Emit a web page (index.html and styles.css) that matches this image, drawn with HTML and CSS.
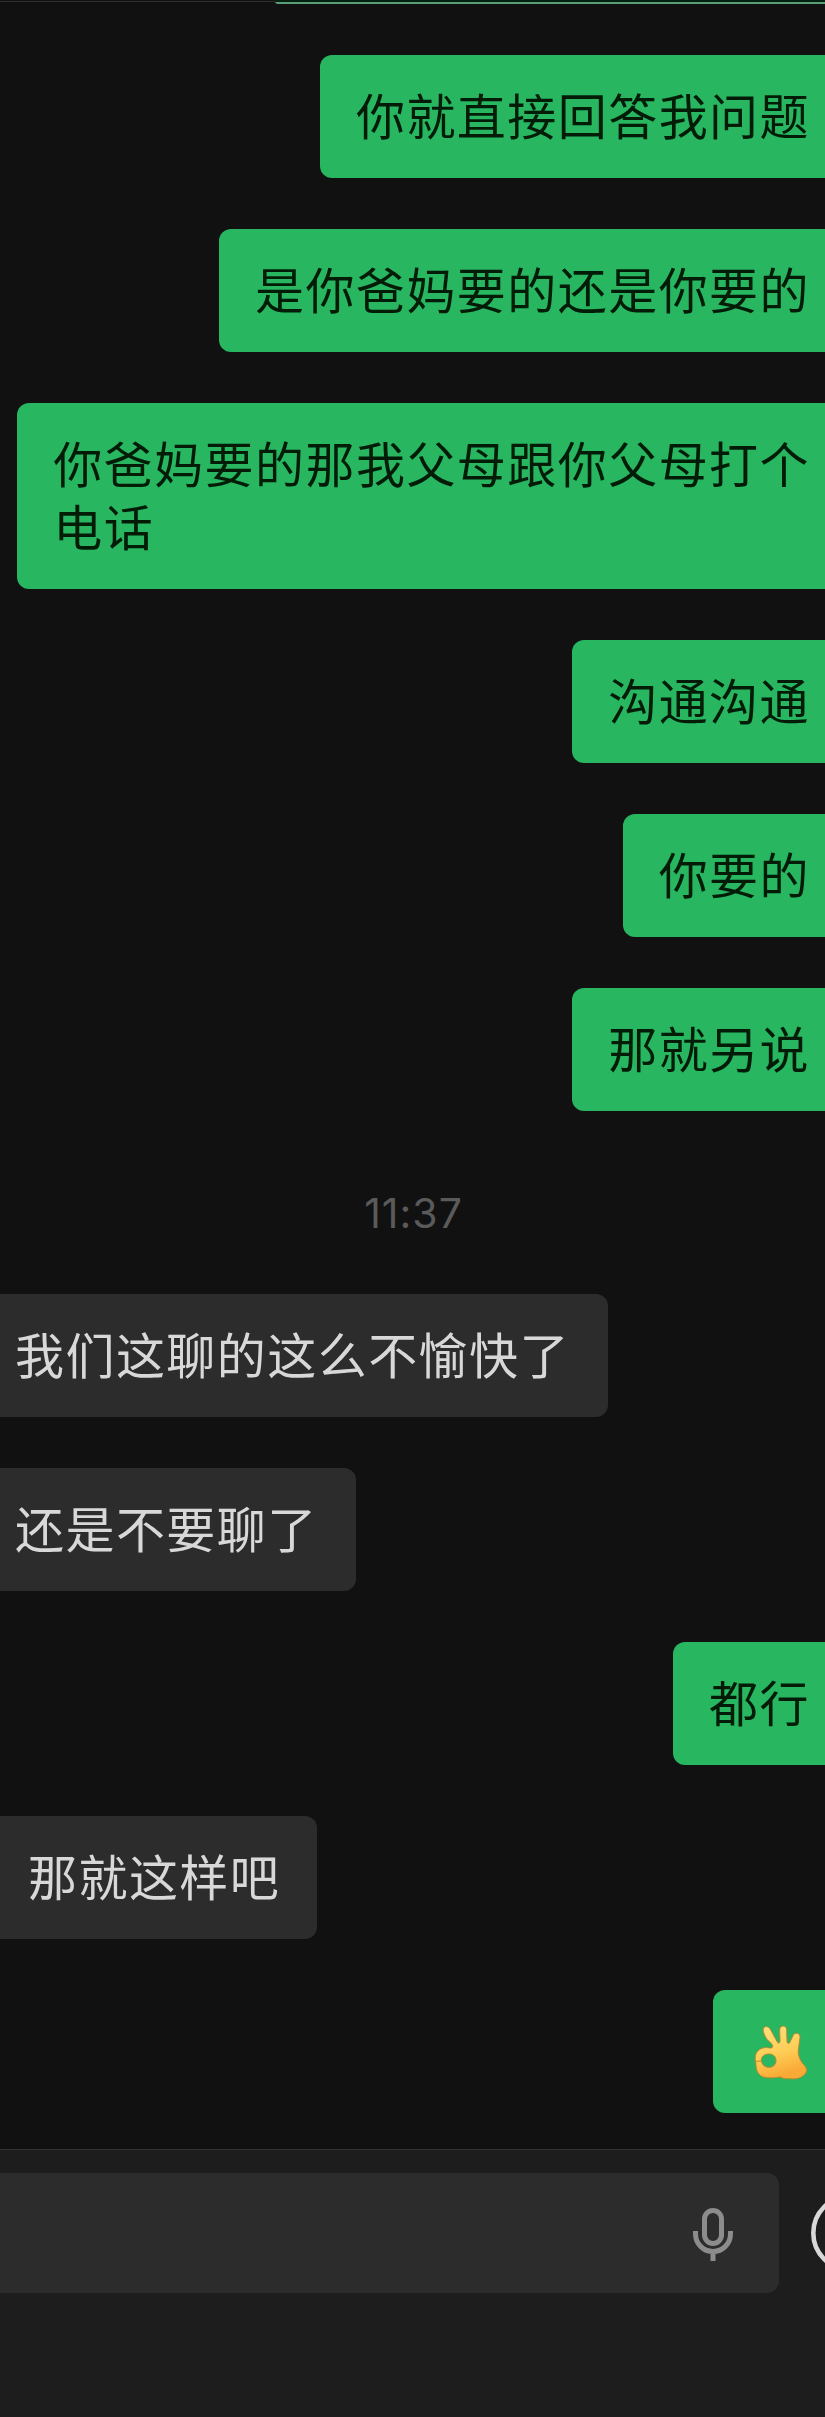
FILE: index.html
```
<!DOCTYPE html>
<html lang="zh-CN">
<head>
    <meta charset="UTF-8">
    <meta name="viewport" content="width=device-width, initial-scale=1.0">
    <title>聊天</title>
    <link rel="stylesheet" href="styles.css">
</head>
<body>
    <div class="chat">
        <div class="top">
            <div class="previous"></div>
        </div>
        <div class="messages">
            <div class="bubble sent">你就直接回答我问题</div>
            <div class="bubble sent">是你爸妈要的还是你要的</div>
            <div class="bubble sent">你爸妈要的那我父母跟你父母打个<br>电话</div>
            <div class="bubble sent">沟通沟通</div>
            <div class="bubble sent">你要的</div>
            <div class="bubble sent">那就另说</div>
            <div class="time">11:37</div>
            <div class="bubble received">我们这聊的这么不愉快了</div>
            <div class="bubble received">还是不要聊了</div>
            <div class="bubble sent">都行</div>
            <div class="bubble received indent">那就这样吧</div>
            <div class="bubble sent emoji">
                <svg class="ok-hand" viewBox="189 159 165 174" role="img" aria-label="OK">
                    <defs>
                        <linearGradient id="skin" x1="0" y1="0" x2="0.3" y2="1">
                            <stop offset="0" stop-color="#ffe183"/>
                            <stop offset="0.6" stop-color="#ffcd55"/>
                            <stop offset="1" stop-color="#f9a936"/>
                        </linearGradient>
                    </defs>
                    <path fill="url(#skin)" stroke="#b58a2c" stroke-width="3" stroke-linejoin="round" fill-rule="evenodd" d="M220 184C216 169 234 164 241 178L262 216C266 222 270 219 270 212L269 180C269 164 290 164 290 180L291 214C292 223 299 222 301 214L309 197C314 185 332 189 330 203L325 239C323 258 332 274 343 286C352 296 353 307 341 316C330 326 316 328 300 326L282 326C277 325 275 321 269 321C254 324 235 325 220 321C204 316 197 298 198 281C196 276 195 268 196 260C198 241 215 231 233 233C240 234 246 235 248 231C249 225 245 221 239 216C228 206 223 196 220 184ZM236 252C223 252 214 260 214 270C214 281 222 291 235 292C249 293 258 284 258 272C258 260 250 252 236 252Z"/>
                    <path fill="none" stroke="#c98a27" stroke-width="3" stroke-linecap="round" d="M198 274L213 273"/>
                </svg>
            </div>
        </div>
        <div class="toolbar">
            <div class="input">
                <svg class="mic" viewBox="0 0 40 54">
                    <rect x="11.5" y="2.5" width="17" height="33" rx="8.5"/>
                    <path d="M2.5 23V26A17.5 17.5 0 0 0 37.5 26V23M20 44V53"/>
                </svg>
            </div>
            <svg class="face" viewBox="0 0 78 78">
                <circle cx="39" cy="39" r="36.7"/>
                <circle class="eye" cx="27" cy="31" r="4"/>
                <circle class="eye" cx="51" cy="31" r="4"/>
                <path d="M20 45A19 19 0 0 0 58 45Z"/>
            </svg>
        </div>
    </div>
</body>
</html>
```
FILE: styles.css
```
* {
    box-sizing: border-box;
}
body {
    margin: 0;
    background-color: #111111;
    font-family: "Noto Sans CJK SC", sans-serif;
}
.chat {
    display: flex;
    flex-direction: column;
    height: 2417px;
    overflow: hidden;
}
.top {
    height: 4px;
    background: linear-gradient(#111111 1px, #2e2e2e 1px, #2e2e2e 2px, #111111 2px);
}
.previous {
    width: 550px;
    height: 4px;
    margin-left: auto;
    border-top: 2px solid #06210f;
    border-bottom: 2px solid #5b9d78;
    border-bottom-left-radius: 3px;
}
.messages {
    display: flex;
    flex-direction: column;
    gap: 51px;
    height: 2145px;
    padding-top: 51px;
}
.bubble {
    padding: 27px 36px 33px;
    font-size: 49px;
    line-height: 63px;
    letter-spacing: 1.45px;
    white-space: nowrap;
}
.sent {
    align-self: flex-end;
    padding-right: 15px;
    background-color: #28b661;
    border-radius: 12px 0 0 12px;
    color: #021c08;
}
.received {
    align-self: flex-start;
    padding-left: 15px;
    padding-right: 38px;
    background-color: #2c2c2c;
    border-radius: 0 12px 12px 0;
    color: #d8d8d8;
}
.indent {
    padding-left: 28px;
    padding-right: 37px;
}
.time {
    height: 81px;
    padding: 26px 0 0 2px;
    text-align: center;
    font-family: Inter, sans-serif;
    font-size: 41px;
    line-height: 50px;
    letter-spacing: 1px;
    color: #5a5a5a;
}
.emoji {
    width: 112px;
    padding: 33px 0 0 40px;
    height: 123px;
}
.ok-hand {
    display: block;
    width: 55px;
    height: 58px;
}
.toolbar {
    display: flex;
    gap: 32px;
    height: 268px;
    padding-top: 23px;
    background-color: #1d1d1d;
    border-top: 1px solid #333333;
}
.input {
    display: flex;
    flex: none;
    justify-content: flex-end;
    width: 779px;
    height: 120px;
    padding: 35px 46px 0 0;
    background-color: #2c2c2c;
    border-radius: 0 12px 12px 0;
}
.mic {
    width: 40px;
    height: 54px;
    fill: none;
    stroke: #8c8c8c;
    stroke-width: 5;
}
.face {
    flex: none;
    width: 78px;
    height: 78px;
    margin-top: 21px;
    fill: none;
    stroke: #d8d8d8;
    stroke-width: 4.6;
}
.eye {
    fill: #d8d8d8;
    stroke: none;
}
```
